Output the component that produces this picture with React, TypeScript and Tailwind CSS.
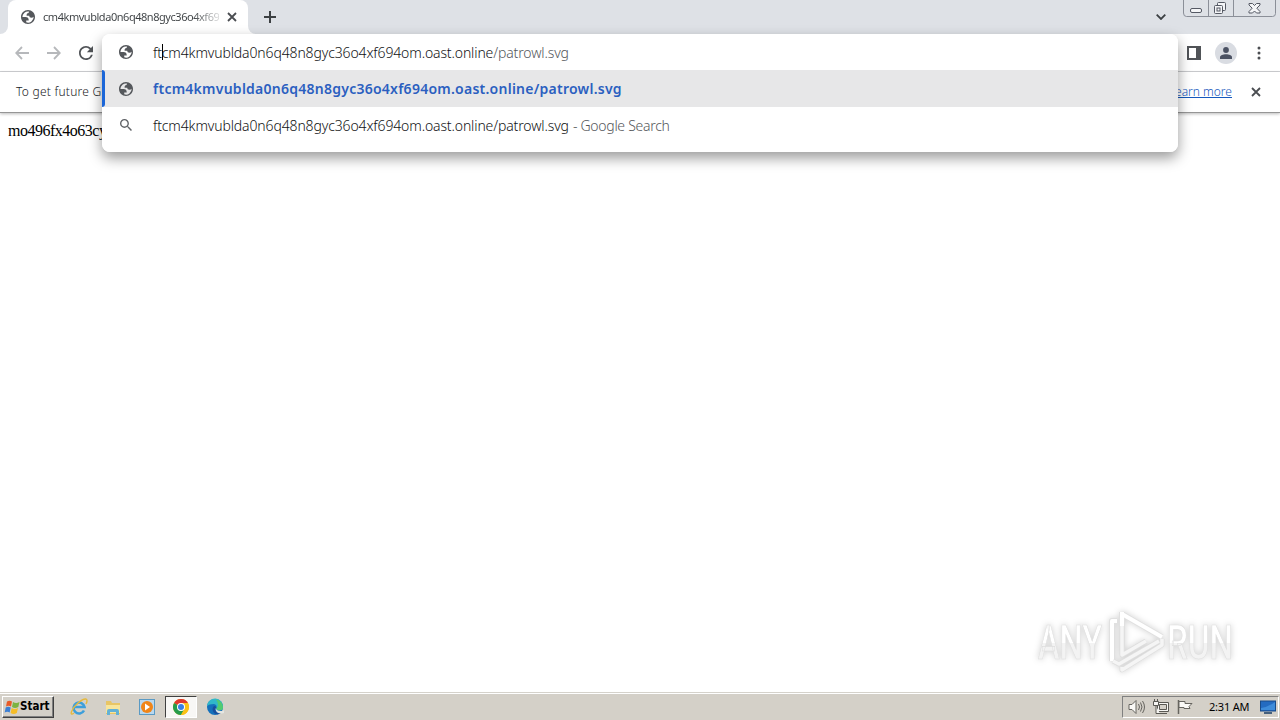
import React from "react";

const Globe = ({ className = "" }: { className?: string }) => (
  <svg viewBox="2 2 20 20" className={`size-[14px] shrink-0 ${className}`} fill="#55585c" fillRule="evenodd">
    <path d="M12 2C6.480 2 2 6.480 2 12s4.480 10 10 10 10-4.480 10-10S17.520 2 12 2zM4 12h4.400c3.407.022 4.922 1.730 4.543 5.127H9.488v2.470a8.004 8.004 0 0 0 10.498-8.083C19.327 12.504 18.332 13 17 13c-2.137 0-3.206-.916-3.206-2.750h-3.748c-.274-2.728.683-4.092 2.870-4.092 0-.975.327-1.597.811-1.970A8.004 8.004 0 0 0 4 12z" />
  </svg>
);

const Cross = ({ className = "" }: { className?: string }) => (
  <svg viewBox="0 0 10 10" className={`shrink-0 ${className}`} fill="none" stroke="#4a4d51" strokeWidth="1.8">
    <path d="M1 1l8 8M9 1L1 9" />
  </svg>
);

const HOST = "ftcm4kmvublda0n6q48n8gyc36o4xf694om.oast.online";

function TabStrip() {
  return (
    <div className="flex h-[34px] shrink-0 bg-[#dee1e6]">
      <div className="w-2 bg-white"><div className="h-full rounded-br-lg bg-[#dee1e6]" /></div>
      <div className="bg-[#dee1e6]">
        <div className="flex h-[34px] w-60 items-center rounded-t-lg bg-white pl-[13px]">
          <Globe />
          <div className="ml-2 w-[176px] overflow-hidden whitespace-nowrap bg-gradient-to-r from-[#3c4043] from-85% to-[#3c404330] bg-clip-text text-[11px] tracking-[-0.46px] text-transparent">
            cm4kmvublda0n6q48n8gyc36o4xf69
          </div>
          <Cross className="ml-[8px] size-[10px]" />
        </div>
      </div>
      <div className="w-2 bg-white"><div className="h-full rounded-bl-lg bg-[#dee1e6]" /></div>
      <svg viewBox="0 0 12 12" className="ml-2 mt-[11px] size-3" stroke="#3c4043" strokeWidth="2">
        <path d="M6 0v12M0 6h12" />
      </svg>
      <svg viewBox="0 0 10 6" className="ml-auto mt-[14px] h-[6px] w-[10px]" fill="none" stroke="#3c4043" strokeWidth="1.8">
        <path d="M.7.7L5 5 9.3.7" />
      </svg>
      <svg viewBox="0 0 93 17" className="ml-[17px] mr-1 h-[17px] w-[93px]" fill="none" stroke="#8b8f98">
        <path d="M.5-1v14q0 3.500 3 3.500h86q3 0 3-3V-1M25.500 0v16M50.500 0v16" />
        <rect x="7.500" y="8.500" width="11" height="4" rx="1.500" fill="#f4f5f7" stroke="#555964" />
        <g fill="#f4f5f7" stroke="#555964">
          <rect x="34.500" y="2.500" width="8" height="8" rx="1" />
          <rect x="31.500" y="5.500" width="8" height="8" rx="1" />
          <rect x="34" y="8" width="3" height="3" />
          <path d="M66 3.500h3.500l2 2 2-2H77v1.500L73.800 8.200l3.200 3.300V13h-3.500l-2-2-2 2H66v-1.500l3.200-3.300L66 5z" />
        </g>
      </svg>
    </div>
  );
}

function Toolbar() {
  return (
    <div className="flex h-[38px] shrink-0 items-center border-b border-[#d0d2d5] bg-white pl-[15px]">
      <svg viewBox="0 0 14 14" className="size-[14px]" fill="none" stroke="#b6b8bb" strokeWidth="1.800"><path d="M14 7H1.500M7 1L1.200 7 7 13" /></svg>
      <svg viewBox="0 0 14 14" className="ml-[18px] size-[14px]" fill="none" stroke="#b6b8bb" strokeWidth="1.800"><path d="M0 7h12.500M7 1l5.800 6L7 13" /></svg>
      <svg viewBox="4 4 16 16" className="ml-[18px] size-[14px]" fill="#505357">
        <path d="M17.650 6.350A7.958 7.958 0 0 0 12 4c-4.420 0-7.990 3.580-7.990 8s3.570 8 7.990 8c3.730 0 6.840-2.550 7.730-6h-2.080A5.990 5.990 0 0 1 12 18c-3.310 0-6-2.690-6-6s2.690-6 6-6c1.660 0 3.140.690 4.220 1.780L13 11h7V4l-2.350 2.350z" />
      </svg>
      <svg viewBox="0 0 14 14" className="ml-auto size-[14px]"><path fill="#505357" fillRule="evenodd" d="M0 0h14v14H0zM2 2v10h7V2z" /></svg>
      <div className="ml-[14px] flex size-[22px] items-center justify-center rounded-full bg-[#d9dce2]">
        <svg viewBox="0 0 12 12" className="size-3" fill="#4b5263"><circle cx="6" cy="3" r="2.900" /><path d="M0 12v-1.700C0 8.300 3 7.300 6 7.300s6 1 6 3V12z" /></svg>
      </div>
      <svg viewBox="0 0 4 14" className="ml-[20px] mr-[19px] h-[14px] w-1" fill="#4b4e52"><circle cx="2" cy="2" r="1.500" /><circle cx="2" cy="7" r="1.500" /><circle cx="2" cy="12" r="1.500" /></svg>
    </div>
  );
}

function Suggestions() {
  return (
    <div className="absolute left-[102px] top-[34px] flex h-[118px] w-[1076px] flex-col overflow-hidden whitespace-pre rounded-lg bg-white text-[14px] text-[#111214]">
      <div className="flex h-9 items-center pl-[17px]">
        <Globe />
        <div className="ml-5 flex font-light tracking-[-0.13px]">
          <span>ft</span>
          <span className="-mr-px mt-[2px] h-4 w-px bg-black" />
          <span>{HOST.slice(2)}</span>
          <span className="text-[#54575b]">/patrowl.svg</span>
        </div>
      </div>
      <div className="flex h-[37px] items-center bg-[#e7e7e8]">
        <div className="h-full w-[3px] rounded-r bg-[#1b66d8]" />
        <Globe className="ml-[14px]" />
        <span className="ml-5 font-semibold tracking-[0.25px] text-[#2b5fc0]">{HOST}/patrowl.svg</span>
      </div>
      <div className="flex h-[37px] items-center pl-[18px]">
        <svg viewBox="3 3 17.500 17.500" className="-mt-px size-3" fill="#606367">
          <path d="M15.500 14h-.790l-.280-.270A6.471 6.471 0 0 0 16 9.500 6.500 6.500 0 1 0 9.500 16c1.610 0 3.090-.590 4.230-1.570l.270.280v.790l5 4.990L20.490 19l-4.990-5zm-6 0C7.010 14 5 11.990 5 9.500S7.010 5 9.500 5 14 7.010 14 9.500 11.990 14 9.500 14z" />
        </svg>
        <span className="ml-[21px] font-light tracking-[-0.13px]">{HOST}/patrowl.svg</span>
        <span className="ml-1 font-light tracking-[-0.28px] text-[#54575b]">- Google Search</span>
      </div>
    </div>
  );
}

function Watermark() {
  return (
    <svg viewBox="0 0 216 72" className="absolute left-[1030px] top-[604px] h-[72px] w-[216px] overflow-visible drop-shadow-[0_0_3px_#00000030]">
      <defs>
        <linearGradient id="fade" x1="0" y1="0" x2="0" y2="1">
          <stop offset=".5" stopColor="#fff" /><stop offset=".51" stopColor="#f3f3f3" />
        </linearGradient>
      </defs>
      <g fill="url(#fade)" stroke="#dedede" strokeWidth=".700" fontFamily="Roboto" fontWeight="500" fontSize="48">
        <text x="8" y="55" textLength="64" lengthAdjust="spacingAndGlyphs">ANY</text>
        <text x="137" y="55" textLength="66" lengthAdjust="spacingAndGlyphs">RUN</text>
      </g>
      <g fill="none" strokeLinejoin="round">
        <path d="M87 17h-5v40M92 8v38M92 10l40 23" stroke="#e0e0e0" strokeWidth="6" />
        <path d="M87 17h-5v40M92 8v38M92 10l40 23" stroke="#fff" strokeWidth="4" />
        <path d="M83 57l6 3 40-23M92 63v3l40-25V35M92 22v29l24-14" stroke="#dedede" strokeWidth="5" />
        <path d="M83 57l6 3 40-23M92 63v3l40-25V35M92 22v29l24-14" stroke="#f5f5f5" strokeWidth="3.500" />
      </g>
    </svg>
  );
}

function Taskbar() {
  return (
    <div className="flex h-7 shrink-0 items-center border-t border-[#d5d2cb] bg-[#d4d0c8] pl-[2px] shadow-[inset_0_1px_#fff]">
      <div className="mt-px flex h-[22px] w-[52px] items-center border border-b-[#404040] border-l-white border-r-[#404040] border-t-white pl-px shadow-[inset_-1px_-1px_#808080]">
        <svg viewBox="0 0 16 16" className="size-4">
          <path d="M3 2.500q2.500-1.500 5 0L7 7.500q-2.500-1.500-5 0z" fill="#e85b28" /><path d="M9 3q3 2 6.500 0l-1.200 5Q11 10 8 8z" fill="#7cb342" />
          <path d="M1.700 8.500q2.500-1.500 5 0l-1 5q-2.500-1.500-5 0z" fill="#3b7fd4" /><path d="M7.700 9q3 2 6.300 0l-1.200 5q-3.200 2-6.200 0z" fill="#f6bd27" />
        </svg>
        <span className="font-['DejaVu_Sans_Condensed',sans-serif] text-[11.500px] font-bold text-black">Start</span>
      </div>
      <svg viewBox="0 0 18 18" className="ml-4 mt-px size-[18px]" fill="none">
        <path d="M14 12.500A5.500 5.500 0 1 1 14.500 9H5" stroke="#3d9fdb" strokeWidth="2.600" />
        <path d="M4 15C-1 19 1 11 8 5s11-5 8 1" stroke="#e6b93c" strokeWidth="1.400" />
      </svg>
      <svg viewBox="0 0 18 18" className="ml-4 mt-px size-[18px]">
        <path d="M2 3h5l1 2h8v11H2z" fill="#e8c565" /><path d="M2 7h14v8H2z" fill="#f8e59b" /><path d="M3 17v-4q0-2 2-2h8q2 0 2 2v4h-3v-3H6v3z" fill="#63b1d5" />
      </svg>
      <svg viewBox="0 0 18 18" className="ml-4 mt-px size-[18px]">
        <rect x="1.500" y="1.500" width="15" height="15" fill="#b9d8ef" stroke="#5a9ac4" /><circle cx="9" cy="9" r="6" fill="#f08519" /><path d="M7 5.500l5 3.500L7 12.500z" fill="#fff" />
      </svg>
      <div className="ml-[9px] mt-px flex h-[22px] w-8 items-center justify-center border border-b-white border-l-[#404040] border-r-white border-t-[#404040] bg-[#f8f7f5]">
        <svg viewBox="0 0 18 18" className="size-4">
          <circle cx="9" cy="9" r="9" fill="#fbc116" /><path d="M9 9L1.200 4.500A9 9 0 0 1 16.800 4.500H9z" fill="#df382e" /><path d="M1.200 4.500A9 9 0 0 0 9 18l4-7-4-2z" fill="#269c4c" />
          <path d="M9 4.500h7.800A9 9 0 0 1 9 18l4-7z" fill="#fbc116" /><circle cx="9" cy="9" r="4.500" fill="#fff" /><circle cx="9" cy="9" r="3.400" fill="#397fe5" />
        </svg>
      </div>
      <svg viewBox="0 0 18 18" className="ml-[9px] mt-px size-[18px]">
        <circle cx="9" cy="9" r="8" fill="#1470bb" /><path d="M1 8a8 8 0 0 1 16 1q0 4-5 3l-2-1q2-4-2-5-5 0-7 2z" fill="#30b8c9" /><path d="M10 1.500A8 8 0 0 1 17 9q0 4-5 3l-2-1q4-4 0-9.500z" fill="#52cb70" /><path d="M10 11q-2 4 6 3-4 4-8 1-3-4 0-7 3 0 2 3z" fill="#174f9d" /><path d="M9.500 10q1 3.500 7 3l1.500-1v3l-2 .5q-7 0-6.500-5.500z" fill="#e4e6e2" />
      </svg>
      <div className="ml-auto mr-px mt-px flex h-[22px] w-[157px] items-center border border-b-white border-l-[#808080] border-r-white border-t-[#808080] pl-[5px]">
        <svg viewBox="0 0 18 16" className="h-4 w-[18px]" fill="none" stroke="#66645f"><path d="M1 5.500h3l4-4v13l-4-4H1z" fill="#faf9f6" /><path d="M10.500 5q2 3 0 6M12.500 3.500q3 4.500 0 9M14.500 2q4 6 0 12" /></svg>
        <svg viewBox="0 0 18 16" className="ml-[6px] h-4 w-[18px]" fill="#f7f6f3" stroke="#5a5853"><path d="M5.500 3.500h11v9h-11zM8 14.500h7" /><path d="M7.500 5.500h7v5h-7z" fill="#d4d0c8" /><path d="M1.500 2.500h5v4h-5zM2.500 0v2M5.500 0v2M4 7v7.500h4" /></svg>
        <svg viewBox="0 0 18 16" className="ml-[6px] h-4 w-[18px]" fill="#faf9f6" stroke="#66645f"><path d="M2.500 1v14" strokeWidth="1.500" /><path d="M3 2.500h6v2h7l-3 3 1 2H8v-1H3z" /></svg>
        <span className="ml-[15px] w-[42px] whitespace-nowrap text-[11px] tracking-[-0.2px] text-black">2:31 AM</span>
        <svg viewBox="0 0 16 14" className="ml-[9px] h-[14px] w-4"><rect x=".5" y="1" width="15" height="10" fill="#246bc1" stroke="#194b88" /><path d="M1 8q7-1 14-6v8H1z" fill="#3e8cda" /><path d="M4 13h8" stroke="#46607d" strokeWidth="2" /></svg>
      </div>
    </div>
  );
}

export default function App() {
  return (
    <div className="relative flex h-[720px] w-[1280px] flex-col overflow-hidden bg-white font-['Noto_Sans',sans-serif]">
      <TabStrip />
      <Toolbar />
      <div className="z-0 flex h-[41px] shrink-0 items-center border-b border-[#969696] bg-white pl-4 pr-[19px] text-[12px] text-[#202124] shadow-[0_1px_3px_#0004]">
        <span className="font-light tracking-[0.25px]">To get future G</span>
        <span className="ml-auto font-light text-[#1558bd] underline">Learn more</span>
        <Cross className="ml-[19px] size-[10px]" />
      </div>
      <main className="flex-1 pl-2 pt-[9px] font-['Liberation_Serif',serif] text-[16px] leading-[18px] tracking-[-0.5px] text-black">
        <span>mo496fx4o63cy</span>
      </main>
      <Taskbar />
      <Watermark />
      <div className="absolute left-[102px] top-[34px] h-[118px] w-[1076px] rounded-lg shadow-[0_6px_14px_#00000066]" />
      <Suggestions />
    </div>
  );
}
